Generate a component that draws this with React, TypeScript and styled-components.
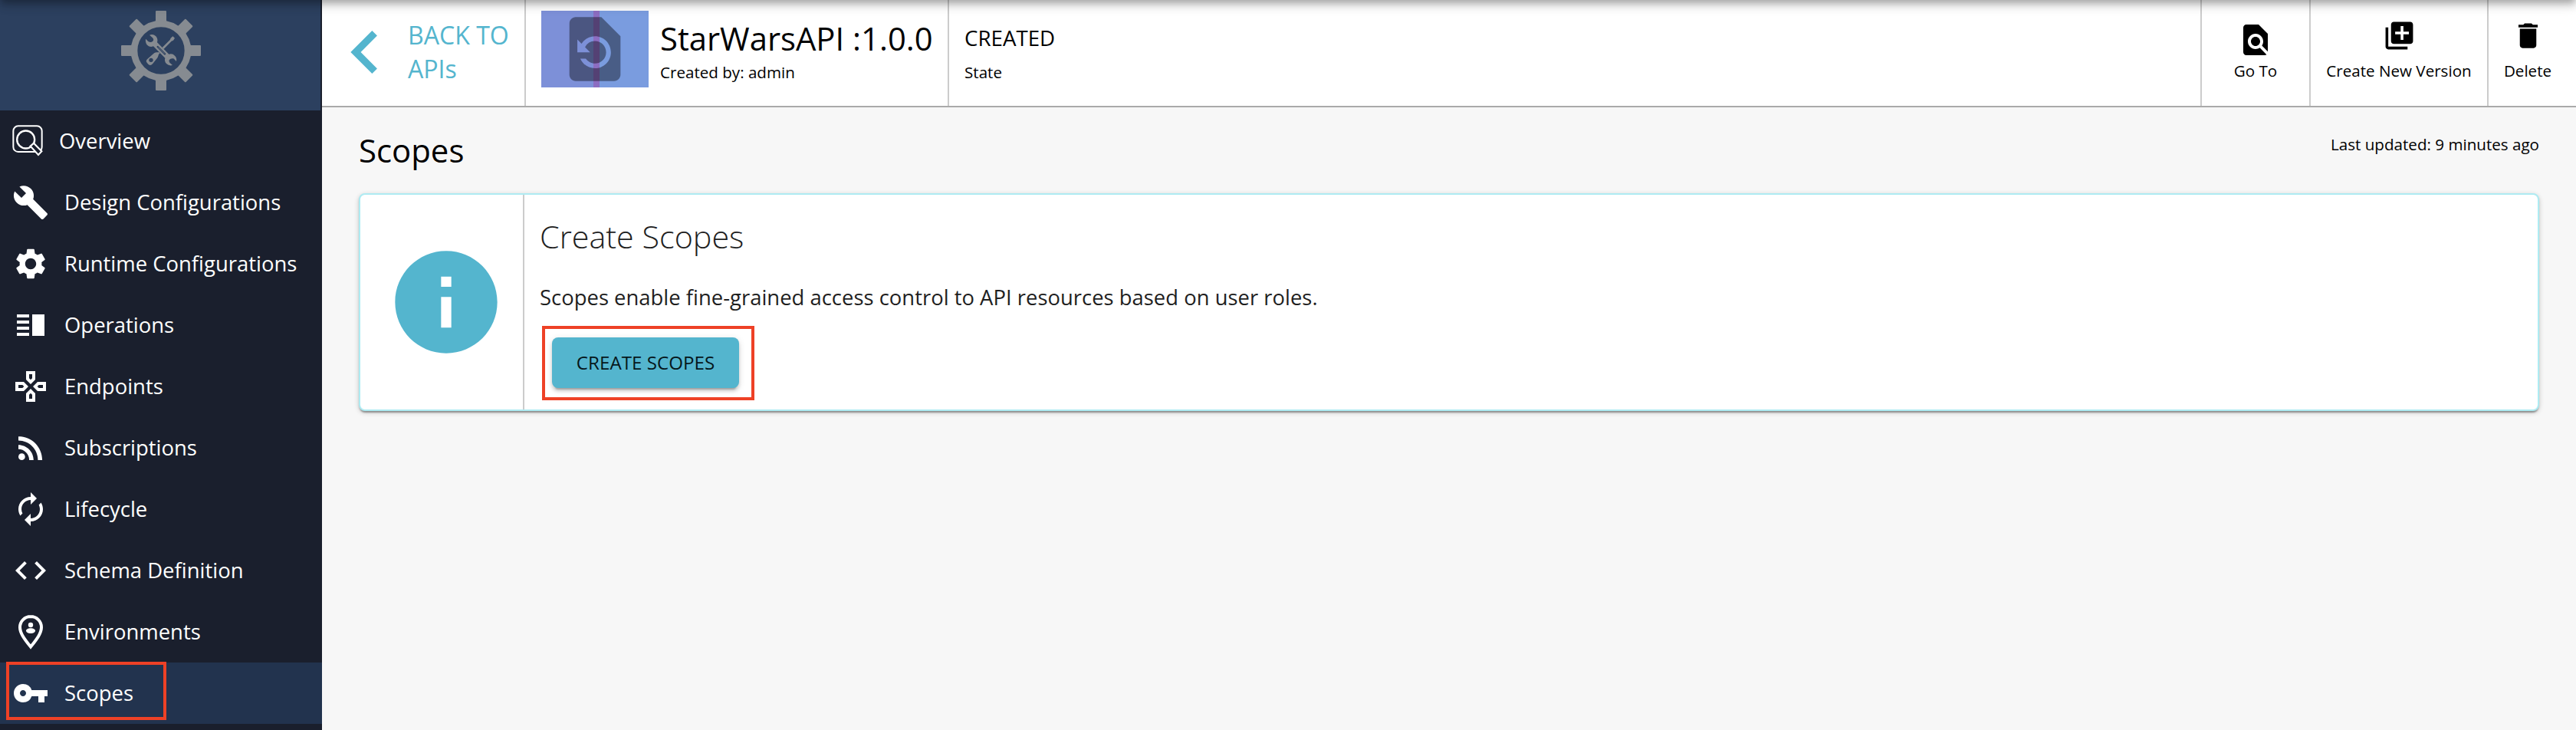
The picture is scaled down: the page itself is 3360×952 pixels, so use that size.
import React from 'react';
import styled, { createGlobalStyle } from 'styled-components';
import {
  MdAutorenew, MdBuild, MdCode, MdDelete, MdFindInPage, MdInfo, MdKeyboardArrowLeft,
  MdLibraryAdd, MdOutlineGames, MdRestorePage, MdRssFeed, MdSettings, MdVerticalSplit,
  MdVpnKey,
} from 'react-icons/md';

const GlobalStyle = createGlobalStyle`
  * { box-sizing: border-box; }
  body {
    margin: 0;
    background: #f7f7f7;
    color: #000;
    font-family: 'Open Sans', sans-serif;
  }
  svg { display: block; flex: none; }
`;

const Page = styled.div`
  position: relative;
  display: flex;
  height: 952px;
  overflow: hidden;
`;

const AppBarShadow = styled.div`
  position: absolute;
  top: -100px;
  left: 0;
  right: 0;
  height: 100px;
  pointer-events: none;
  box-shadow:
    0 4px 8px -2px rgba(0, 0, 0, 0.2),
    0 8px 10px 0 rgba(0, 0, 0, 0.14),
    0 2px 20px 0 rgba(0, 0, 0, 0.12);
`;

const Sidebar = styled.nav`
  flex: none;
  width: 420px;
  background: #1a1f2d;
  color: #fff;
`;

const LogoBox = styled.div`
  display: flex;
  justify-content: center;
  width: 418px;
  height: 144px;
  padding: 14px 0 0 2px;
  background: #2c405f;
`;

const NavItem = styled.a<{ $active?: boolean }>`
  position: relative;
  display: flex;
  align-items: center;
  gap: 20px;
  height: 80px;
  padding-left: 16px;
  background: ${(p) => (p.$active ? '#22334e' : 'transparent')};
  font-size: 27.45px;
  line-height: 38px;
  white-space: nowrap;
`;

const NavLabel = styled.span`
  margin-top: -1px;
`;

const Highlight = styled.span<{ $x: number; $y: number; $w: number; $h: number }>`
  position: absolute;
  left: ${(p) => p.$x}px;
  top: ${(p) => p.$y}px;
  width: ${(p) => p.$w}px;
  height: ${(p) => p.$h}px;
  border: 4px solid #ee4126;
`;

const Main = styled.main`
  flex: 1;
  display: flex;
  flex-direction: column;
`;

const Header = styled.header`
  display: flex;
  height: 140px;
  padding-right: 12px;
  background: #fff;
  border-bottom: 2px solid #aaa;
`;

const BackLink = styled.a`
  display: flex;
  align-items: center;
  width: 266px;
  padding-bottom: 2px;
  border-right: 2px solid #ccc;
  color: #54b5ce;
  font-size: 32.1px;
  line-height: 44px;
  white-space: nowrap;
`;

const ApiInfo = styled.div`
  display: flex;
  gap: 15px;
  width: 552px;
  padding: 14px 0 0 20px;
  border-right: 2px solid #ccc;
`;

const Thumbnail = styled.div`
  display: flex;
  justify-content: center;
  width: 140px;
  height: 100px;
  color: rgba(0, 0, 0, 0.4);
  background: linear-gradient(
    to right,
    #7d90d8 0 68px,
    #8c6dc1 68px 76px,
    #7a9cdf 76px 100%
  );
`;

const ApiTitle = styled.div`
  margin: 7px 0 1px;
  font-size: 41.8px;
  line-height: 57px;
  white-space: nowrap;
`;

const Small = styled.div`
  font-size: 20.6px;
  line-height: 30px;
  white-space: nowrap;
`;

const StateInfo = styled.div`
  flex: 1;
  padding: 30px 0 0 20px;
`;

const StateName = styled.div`
  font-size: 27.7px;
  line-height: 38px;
  margin-bottom: 11px;
`;

const Action = styled.button<{ $width: number; $top: number; $gap: number }>`
  display: flex;
  flex-direction: column;
  align-items: center;
  gap: ${(p) => p.$gap}px;
  width: ${(p) => p.$width}px;
  padding: ${(p) => p.$top}px 0 0;
  border: 0;
  border-left: 2px solid #ccc;
  background: none;
  color: #000;
  font-family: inherit;
`;

const Content = styled.section`
  padding: 0 48px;
`;

const ContentHead = styled.div`
  display: flex;
  justify-content: space-between;
  height: 112px;
`;

const PageTitle = styled.h1`
  margin: 27px 0 0;
  font-size: 41.9px;
  font-weight: 400;
  line-height: 57px;
`;

const Updated = styled(Small)`
  margin-top: 33px;
`;

const Card = styled.div`
  display: flex;
  height: 284px;
  background: #fff;
  border: 2px solid #aeebf2;
  border-radius: 8px;
  box-shadow:
    0 2px 6px 0 rgba(0, 0, 0, 0.2),
    0 2px 2px 0 rgba(0, 0, 0, 0.14),
    0 4px 2px -2px rgba(0, 0, 0, 0.22);
`;

const InfoCell = styled.div`
  display: flex;
  align-items: center;
  width: 214px;
  padding-left: 32px;
  border-right: 2px solid #ccc;
  color: #54b5ce;
`;

const CardBody = styled.div`
  position: relative;
  flex: 1;
  padding: 26px 0 0 20px;
  color: #1f1f1f;
`;

const CardTitle = styled.h2`
  margin: 0;
  font-size: 41.3px;
  font-weight: 300;
  line-height: 56px;
`;

const CardText = styled.p`
  margin: 33px 0 34px;
  font-size: 27.45px;
  line-height: 37px;
`;

const CreateButton = styled.button`
  display: block;
  height: 66px;
  width: 244px;
  margin-left: 16px;
  padding: 0;
  border: 0;
  border-radius: 8px;
  background: #54b5ce;
  color: #06171b;
  font-family: inherit;
  font-size: 24.17px;
  line-height: 40px;
  box-shadow:
    0 6px 2px -4px rgba(0, 0, 0, 0.2),
    0 4px 4px 0 rgba(0, 0, 0, 0.14),
    0 2px 10px 0 rgba(0, 0, 0, 0.12);
`;

const GearLogo = () => (
  <svg width="104" height="104" viewBox="24 27 312 312">
    <g fill="#868b91">
      {[0, 45, 90, 135, 180, 225, 270, 315].map((angle) => (
        <path
          key={angle}
          d="M153 78 Q159 72 159 64 V30 q0 -3 3 -3 h36 q3 0 3 3 V64 Q201 72 207 78z"
          transform={`rotate(${angle} 180 183)`}
        />
      ))}
    </g>
    <circle cx="180" cy="183" r="105" fill="#2c405f" stroke="#868b91" strokeWidth="26" />
    <g fill="#868b91">
      <path d="M215 141 l3 -7 8 -7 8 7 -6 9 -7 3 -34 35 -6 -6z" />
      <path d="M173 188 l4 5 q-7 2 -8 11 q-1 6 -5 10 L147 235 q-8 9 -17 1 l-5 -6 q-6 -6 1 -13 l22 -20 q6 -6 13 -7 q7 0 12 -2z" />
    </g>
    <circle cx="141" cy="220" r="8" fill="#2c405f" />
    <path d="M164 166 L197 199" stroke="#2c405f" strokeWidth="22" />
    <path
      fill="#868b91"
      d="M135 122 q14 -6 25 5 q9 10 5 24 L211 197 q14 -4 23 6 q9 9 6 22 l-11 -11 q-12 -2 -17 6 q-2 8 2 10 l11 10 q-13 4 -23 -5 q-10 -10 -6 -23 L150 166 q-14 5 -24 -5 q-8 -9 -6 -24 l10 10 q10 6 17 0 q7 -6 0 -14z"
    />
    <path d="M167 168 L195 196" stroke="#2c405f" strokeWidth="7" strokeLinecap="round" />
    <path d="M169 170 L194 195" stroke="#868b91" strokeWidth="2" />
  </svg>
);

const OverviewIcon = () => (
  <svg width="41" height="41.33" viewBox="0 0 123 124" fill="none" stroke="#fff" strokeWidth="6">
    <rect x="4" y="4" width="112" height="101" rx="19" />
    <circle cx="53" cy="57" r="34.5" strokeWidth="7" />
    <path d="M71 83 L84 71 L115 103 L102 117z" fill="#1a1f2d" strokeWidth="6.5" />
  </svg>
);

const PersonPinIcon = ({ size }: { size: number }) => (
  <svg width={size} height={size} viewBox="0 0 24 24" fill="#fff">
    <path
      d="M12 2C8.13 2 5 5.1 5 9c0 3.7 2.6 7.3 7 12.8C16.4 16.300 19 12.700 19 9c0-3.900-3.130-7-7-7z"
      fill="none"
      stroke="#fff"
      strokeWidth="2"
    />
    <circle cx="12" cy="7.500" r="1.600" />
    <path d="M12 9.600c1.700 0 3 .8 3 1.600 0 .9-1.300 1.800-3 1.800s-3-.9-3-1.800c0-.8 1.300-1.600 3-1.600z" />
  </svg>
);

type NavIcon = React.ComponentType<{ size: number }>;

const navItems: { label: string; icon: NavIcon }[] = [
  { label: 'Overview', icon: OverviewIcon },
  { label: 'Design Configurations', icon: MdBuild },
  { label: 'Runtime Configurations', icon: MdSettings },
  { label: 'Operations', icon: MdVerticalSplit },
  { label: 'Endpoints', icon: MdOutlineGames },
  { label: 'Subscriptions', icon: MdRssFeed },
  { label: 'Lifecycle', icon: MdAutorenew },
  { label: 'Schema Definition', icon: MdCode },
  { label: 'Environments', icon: PersonPinIcon },
  { label: 'Scopes', icon: MdVpnKey },
];

export default function App() {
  return (
    <>
      <GlobalStyle />
      <Page>
        <Sidebar>
          <LogoBox><GearLogo /></LogoBox>
          {navItems.map(({ label, icon: Icon }) => (
            <NavItem key={label} $active={label === 'Scopes'}>
              <Icon size={48} />
              <NavLabel>{label}</NavLabel>
              {label === 'Scopes' && <Highlight $x={8} $y={-1} $w={209} $h={76} />}
            </NavItem>
          ))}
        </Sidebar>
        <Main>
          <Header>
            <BackLink>
              <MdKeyboardArrowLeft size={112} />
              <span>BACK TO<br />APIs</span>
            </BackLink>
            <ApiInfo>
              <Thumbnail><MdRestorePage size={100} /></Thumbnail>
              <div>
                <ApiTitle>StarWarsAPI :1.0.0</ApiTitle>
                <Small>Created by: admin</Small>
              </div>
            </ApiInfo>
            <StateInfo>
              <StateName>CREATED</StateName>
              <Small>State</Small>
            </StateInfo>
            <Action $width={142} $top={28} $gap={1}>
              <MdFindInPage size={48} />
              <Small>Go To</Small>
            </Action>
            <Action $width={232} $top={25} $gap={9}>
              <MdLibraryAdd size={43} />
              <Small>Create New Version</Small>
            </Action>
            <Action $width={104} $top={25} $gap={9}>
              <MdDelete size={43} />
              <Small>Delete</Small>
            </Action>
          </Header>
          <Content>
            <ContentHead>
              <PageTitle>Scopes</PageTitle>
              <Updated>Last updated: 9 minutes ago</Updated>
            </ContentHead>
            <Card>
              <InfoCell><MdInfo size={160} /></InfoCell>
              <CardBody>
                <CardTitle>Create Scopes</CardTitle>
                <CardText>
                  Scopes enable fine-grained access control to API resources based on user roles.
                </CardText>
                <CreateButton>CREATE SCOPES</CreateButton>
                <Highlight $x={23} $y={171} $w={277} $h={97} />
              </CardBody>
            </Card>
          </Content>
        </Main>
        <AppBarShadow />
      </Page>
    </>
  );
}
